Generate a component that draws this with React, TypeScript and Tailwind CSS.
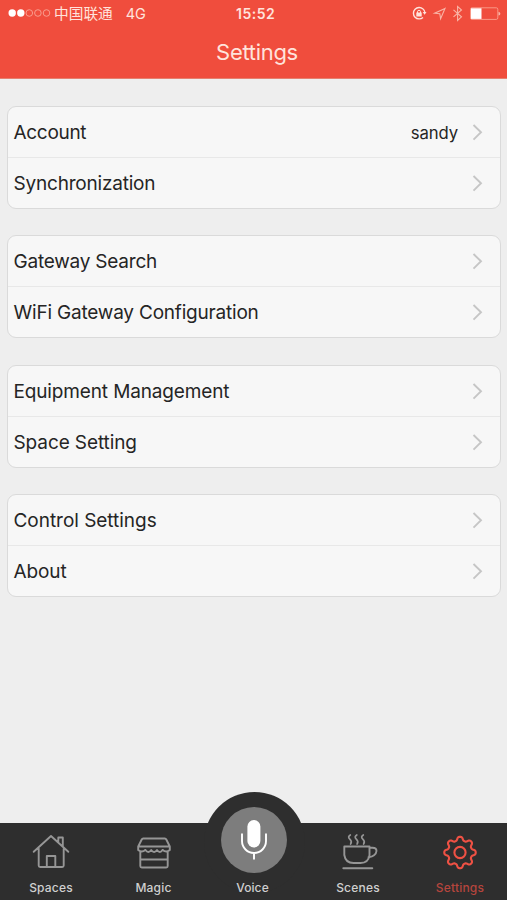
import type { ReactNode } from 'react';

type Row = { label: string; value?: string; spacing: string };

const groups: Row[][] = [
  [
    { label: 'Account', value: 'sandy', spacing: 'tracking-[-0.3px]' },
    { label: 'Synchronization', spacing: 'tracking-[-0.2px]' },
  ],
  [
    { label: 'Gateway Search', spacing: 'tracking-[-0.22px]' },
    { label: 'WiFi Gateway Configuration', spacing: 'tracking-[-0.2px]' },
  ],
  [
    { label: 'Equipment Management', spacing: 'tracking-[-0.14px]' },
    { label: 'Space Setting', spacing: 'tracking-[-0.1px]' },
  ],
  [
    { label: 'Control Settings', spacing: 'tracking-[-0.03px]' },
    { label: 'About', spacing: 'tracking-[-0.1px]' },
  ],
];

// Closed wavy outline with eight rounded teeth
function gearPath(cx: number, cy: number) {
  const points: string[] = [];
  for (let i = 0; i <= 160; i++) {
    const a = (i / 160) * Math.PI * 2;
    const r = 13.9 + 2 * Math.tanh(1.5 * Math.cos(8 * a));
    points.push(`${(cx + r * Math.sin(a)).toFixed(2)} ${(cy - r * Math.cos(a)).toFixed(2)}`);
  }
  return `M${points.join('L')}Z`;
}

function StatusBar() {
  return (
    <div className="relative flex h-[27px] items-center justify-between text-[#ffe3dc]">
      <div className="flex items-center pl-2">
        <svg width="43" height="10" viewBox="0 0 43 10" fill="none">
          <circle cx="4.2" cy="5" r="3.7" fill="#fff" />
          <circle cx="12.8" cy="5" r="3.7" fill="#fff" />
          <g stroke="#f9a596" strokeWidth="0.9">
            <circle cx="21.3" cy="5" r="3.3" />
            <circle cx="29.9" cy="5" r="3.3" />
            <circle cx="38.5" cy="5" r="3.3" />
          </g>
        </svg>
        <span className="ml-[3px] pt-[2px] text-[14.7px] leading-none">中国联通</span>
        <span className="ml-[13px] pt-[2px] text-[14.5px] leading-none tracking-[-0.2px]">4G</span>
      </div>
      <span className="absolute left-[236px] top-[6px] text-[14px] leading-4 font-semibold tracking-[0.5px]">15:52</span>
      <svg className="absolute left-[408px] top-0" width="99" height="27" viewBox="0 0 99 27" fill="none">
        <path d="M15 9A5.7 5.7 0 1 0 15 17.4" stroke="#ffe3dc" strokeWidth="1.4" />
        <path d="M15 9Q16.500 10.300 16.800 12" stroke="#ffe3dc" strokeWidth="1.2" />
        <path d="M14.700 12h3.800l-1.900 2.800z" fill="#ffe3dc" />
        <rect x="8.300" y="12.500" width="5.400" height="4" fill="#ffe3dc" />
        <path d="M9.500 13v-1.200a1.500 1.500 0 0 1 3 0V13" stroke="#ffe3dc" strokeWidth="1" />
        <path d="M37 8.400 26.600 13.200l5.200.5.8 5z" stroke="#f9b5a7" strokeWidth="1.1" />
        <path d="m45.500 9.800 8 7-3.900 3.600V6.400l3.900 3.600-8 6.900" stroke="#f9b5a7" strokeWidth="1.100" />
        <rect x="62.500" y="7.800" width="27.300" height="11.600" rx="1.500" stroke="#f9a08f" strokeWidth="0.9" />
        <rect x="63" y="8.300" width="10.500" height="10.600" fill="#fff" />
        <path d="M90.500 11.800v3.800q1.900-.6 1.900-1.900t-1.900-1.900z" fill="#f9b5a7" />
      </svg>
    </div>
  );
}

function SettingRow({ row, first }: { row: Row; first: boolean }) {
  return (
    <div
      className={`flex flex-1 items-center pl-[5.500px] pr-4 text-[#252525] ${
        first ? 'border-b border-[#e8e8e8]' : ''
      }`}
    >
      <span className={`pt-[2px] text-[19px] leading-6 whitespace-nowrap ${row.spacing}`}>{row.label}</span>
      {row.value && (
        <span className="ml-auto mr-[14px] pt-px text-[16.700px] leading-6 tracking-[-0.1px]">{row.value}</span>
      )}
      <svg className={row.value ? '' : 'ml-auto'} width="12" height="18" viewBox="0 0 12 18" fill="none">
        <path d="m1.500 2 7.500 7.300-7.500 7.300" stroke="#c6c6c6" strokeWidth="1.900" />
      </svg>
    </div>
  );
}

function Tab({
  label,
  className,
  active,
  children,
}: {
  label: string;
  className: string;
  active?: boolean;
  children?: ReactNode;
}) {
  return (
    <div className={`relative flex flex-col items-center ${className}`}>
      <svg
        className="mt-[9px]"
        width="42"
        height="42"
        viewBox="0 0 42 42"
        fill="none"
        stroke={active ? '#ee5144' : '#969696'}
        strokeWidth="1.9"
        strokeLinejoin="round"
        strokeLinecap="round"
      >
        {children}
      </svg>
      <span
        className={`mt-[6px] text-[12px] leading-4 font-medium tracking-[0.2px] ${
          active ? 'text-[#b5453d]' : 'text-[#d0d0d0]'
        }`}
      >
        {label}
      </span>
    </div>
  );
}

export default function App() {
  return (
    <div className="flex h-[900px] w-[507px] flex-col overflow-hidden bg-[#eeeeee] font-['Inter','Noto_Sans_CJK_SC',sans-serif]">
      <header className="h-[79px] shrink-0 border-b border-[#e5806f] bg-[#f04d3d]">
        <StatusBar />
        <h1 className="mt-[9px] pl-[7px] text-center text-[22px] leading-8 tracking-[-0.3px] text-[#ffe3dc]">Settings</h1>
      </header>

      <main className="flex flex-1 flex-col gap-[26.4px] px-[7px] pr-[6px] pt-[27px]">
        {groups.map((rows) => (
          <section
            key={rows[0].label}
            className="flex h-[103px] flex-col rounded-[9px] border border-[#dadada] bg-[#f7f7f7]"
          >
            {rows.map((row, i) => (
              <SettingRow key={row.label} row={row} first={i === 0} />
            ))}
          </section>
        ))}
      </main>

      <nav className="relative flex h-[77px] shrink-0 bg-[#2e2e2e]">
        <div className="absolute left-[204px] top-[-31px] size-[101px] rounded-full bg-[#2e2e2e]" />
        <Tab label="Spaces" className="w-[102px]">
          <path d="M3.700 19.800 21 4l17.300 15.800M8.700 16.500V33.500q0 1.500 1.500 1.500h22q1.500 0 1.500-1.500v-17M16.800 35V24h8.500v11M28.300 9.500V5.500h4.500v8.500" />
        </Tab>
        <Tab label="Magic" className="w-[103px]">
          <path d="M10.200 6.500h21.600q1 0 1.500 1l3.500 7H5.200l3.500-7q.5-1 1.500-1zM5.200 14.500v3.500q3.500 3 7.200 0M7.300 20v14q0 1.500 1.500 1.500h24.400q1.500 0 1.500-1.500V20M7.300 27.500h27.400M36.800 14.500v3.500q-3.500 3-7.200 0" />
          <path d="M12.400 18q2.900 4 5.800 0 2.900 4 5.800 0 2.900 4 5.600 0" />
        </Tab>
        <div className="relative flex w-[98px] flex-col items-center">
          <div className="absolute left-[16px] top-[-16px] size-[66px] rounded-full bg-[#7d7d7d]">
            <svg width="66" height="66" viewBox="0 0 66 66" fill="none">
              <rect x="26.400" y="13" width="13" height="27.500" rx="6.500" fill="#fff" />
              <path d="M21 26.500v7.500a12 12 0 0 0 24 0V26.500M33 46v6.500" stroke="#fff" strokeWidth="1.900" />
            </svg>
          </div>
          <span className="mt-[57px] pr-[3px] text-[12px] leading-4 font-medium tracking-[0.1px] text-[#d0d0d0]">
            Voice
          </span>
        </div>
        <Tab label="Scenes" className="w-[110px]">
          <path d="M7.300 14.500h25.200v8.500q-1 8-9 8h-7q-8 0-9.200-8zM32.500 15.800h3q4 0 4 3.200-.5 5-8 6.300M6.300 36.300h29" />
          <path
            d="M13.300 3q-3 1.800-.5 4.200t.8 4.800M19.800 3q-3 1.800-.5 4.200t.8 4.800M26.300 3q-3 1.800-.5 4.200t.8 4.800"
            strokeWidth="1.700"
          />
        </Tab>
        <Tab label="Settings" className="w-[94px]" active>
          <g strokeWidth="2.100">
            <path d={gearPath(21, 20.500)} />
            <circle cx="21" cy="20.500" r="5.600" />
          </g>
        </Tab>
      </nav>
    </div>
  );
}
